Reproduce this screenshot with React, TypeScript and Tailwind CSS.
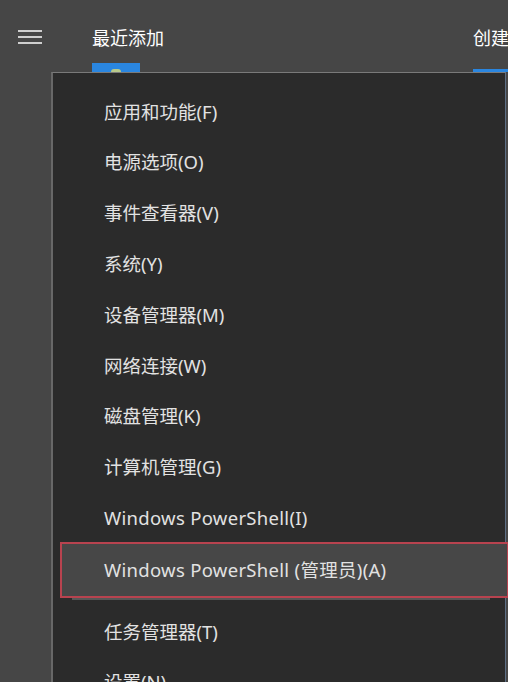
const items = [
  '应用和功能(F)',
  '电源选项(O)',
  '事件查看器(V)',
  '系统(Y)',
  '设备管理器(M)',
  '网络连接(W)',
  '磁盘管理(K)',
  '计算机管理(G)',
];

function Hamburger() {
  return (
    <div className="flex w-6 flex-col gap-[4px]">
      <div className="h-[2px] bg-[#cfcfcf]" />
      <div className="h-[2px] bg-[#cfcfcf]" />
      <div className="h-[2px] bg-[#cfcfcf]" />
    </div>
  );
}

function Item({ label, wide }: { label: string; wide?: boolean }) {
  return (
    <div
      className={
        wide
          ? 'flex h-[50.8px] items-center whitespace-nowrap pl-[51px] text-[18.5px] tracking-[0.3px] text-[#e2e2e2]'
          : 'flex h-[50.8px] items-center whitespace-nowrap pl-[51px] text-[18.5px] text-[#e2e2e2]'
      }
    >
      {label}
    </div>
  );
}

export default function App() {
  return (
    <div
      className="h-[682px] w-[508px] overflow-hidden bg-[#464646]"
      style={{ fontFamily: '"Noto Sans", "Noto Sans CJK SC", sans-serif' }}
    >
      {/* header */}
      <div className="flex h-[63px] items-start">
        <div className="ml-[18px] mt-[30px]">
          <Hamburger />
        </div>
        <div className="ml-[50px] mt-[25px] text-[18px] leading-[26px] text-white">最近添加</div>
        <div className="ml-auto mt-[25px] w-[35px] overflow-hidden whitespace-nowrap text-[18px] leading-[26px] text-white">创建</div>
      </div>

      {/* tiles peeking above the menu */}
      <div className="flex h-[9px]">
        <div className="ml-[92px] flex h-full w-[48px] justify-center bg-[#2a86e0]">
          <div className="mt-[6px] h-[3px] w-[10px] rounded-t-full bg-[#b8c98a]" />
        </div>
        <div className="ml-auto mt-[6px] h-[3px] w-[35px] bg-[#2a86e0]" />
      </div>

      {/* context menu */}
      <div className="ml-[51px] h-[620px] w-[455px] border-l-2 border-r border-t border-l-[#686868] border-r-[#5d6f86] border-t-[#7a7a7a] bg-[#2b2b2b] pt-[13px]">
        {items.map((t) => (
          <Item key={t} label={t} />
        ))}
        <Item label="Windows PowerShell(I)" wide />
        <div className="-mr-[4px] mt-[-1px] pl-[7px]">
          <div className="flex h-[56px] items-center whitespace-nowrap border-2 border-[#b8434f] bg-[#474747] pl-[42px] text-[18.5px] tracking-[0.3px] text-[#e2e2e2]">
            Windows PowerShell (管理员)(A)
          </div>
        </div>
        <div className="ml-[19px] mr-[15px] h-[2px] bg-[#575757]" />
        <div className="mt-[6px]">
          <Item label="任务管理器(T)" />
          <Item label="设置(N)" />
        </div>
      </div>
    </div>
  );
}
